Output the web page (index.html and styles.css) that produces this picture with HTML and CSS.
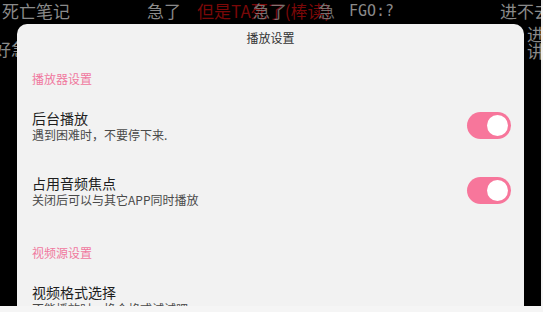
FILE: index.html
```html
<!DOCTYPE html>
<html lang="zh">
<head>
<meta charset="utf-8">
<link rel="stylesheet" href="styles.css">
</head>
<body>
<div class="screen">
  <div class="danmaku">
    <span class="dm gray d1">死亡笔记</span>
    <span class="dm gray d2">急了</span>
    <span class="dm red d3">但是TA死了(棒读)</span>
    <span class="dm gray d4">急了</span>
    <span class="dm gray d5">急</span>
    <span class="dm gray d6">FGO:?</span>
    <span class="dm gray d7">进不去</span>
    <span class="dm gray d8">进不去</span>
    <span class="dm gray d9">讲不去</span>
    <span class="dm gray d10">好急</span>
    <span class="dm gray d11">前方高能</span>
    <span class="dm gray d12">哈哈哈哈哈</span>
    <span class="dm gray d13">来了来了</span>
  </div>
  <div class="dialog">
    <div class="dialog-title">播放设置</div>
    <div class="section-header">播放器设置</div>
    <div class="item">
      <div class="item-text">
        <div class="item-title">后台播放</div>
        <div class="item-sub">遇到困难时，不要停下来.</div>
      </div>
      <span class="switch"><span class="knob"></span></span>
    </div>
    <div class="item">
      <div class="item-text">
        <div class="item-title">占用音频焦点</div>
        <div class="item-sub">关闭后可以与其它APP同时播放</div>
      </div>
      <span class="switch"><span class="knob"></span></span>
    </div>
    <div class="section-header">视频源设置</div>
    <div class="item">
      <div class="item-text">
        <div class="item-title">视频格式选择</div>
        <div class="item-sub">不能播放时，换个格式试试吧</div>
      </div>
    </div>
  </div>
</div>
</body>
</html>
```

FILE: styles.css
```css
html, body {
  margin: 0;
  padding: 0;
}
body {
  background: #f5f5f5;
  width: 543px;
  height: 312px;
  overflow: hidden;
  font-family: "Noto Sans CJK SC", "Noto Sans", sans-serif;
}
.screen {
  position: relative;
  width: 541px;
  height: 306px;
  background: #000;
  overflow: hidden;
  box-sizing: border-box;
  padding: 24px 17px 0 17px;
}
.danmaku {
  position: absolute;
  inset: 0;
  z-index: 0;
}
.dm {
  position: absolute;
  font-size: 17px;
  line-height: 20px;
  white-space: nowrap;
}
.gray { color: #8a8a8a; }
.red { color: #7a0808; }
.d1 { left: 2px; top: 1px; }
.d2 { left: 147px; top: 1px; }
.d3 { left: 197px; top: 1px; }
.d4 { left: 253px; top: 1px; opacity: 0.8; }
.d5 { left: 318px; top: 1px; opacity: 0.8; }
.d6 { left: 349px; top: 1px; font-family: "DejaVu Sans Mono", monospace; font-size: 15px; }
.d7 { left: 500px; top: 1px; }
.d8 { left: 527px; top: 24px; }
.d9 { left: 527px; top: 41px; }
.d10 { left: -6px; top: 39px; }
.d11 { left: 100px; top: 22px; opacity: 0.7; }
.d12 { left: 175px; top: 22px; opacity: 0.7; }
.d13 { left: 420px; top: 22px; opacity: 0.7; }

.dialog {
  position: relative;
  z-index: 1;
  background: #f2f2f2;
  border-radius: 10px 10px 0 0;
  height: 300px;
  display: flex;
  flex-direction: column;
}
.dialog-title {
  height: 25px;
  line-height: 27px;
  text-align: center;
  font-size: 12px;
  color: #333;
}
.section-header {
  padding: 21px 15px 6px;
  line-height: 17px;
  font-size: 12px;
  color: #f0789e;
}
.item {
  display: flex;
  align-items: center;
  justify-content: space-between;
  padding: 15.5px 13px 15.5px 15px;
}
.item-text {
  display: flex;
  flex-direction: column;
}
.item-title {
  font-size: 14px;
  line-height: 18px;
  color: #1e1e1e;
}
.item-sub {
  font-size: 12px;
  line-height: 16px;
  color: #4a4a4a;
}
.switch {
  position: relative;
  width: 44px;
  height: 27px;
  border-radius: 14px;
  background: #f7769b;
  display: flex;
  align-items: center;
  justify-content: flex-end;
  padding-right: 3px;
  box-sizing: border-box;
}
.knob {
  width: 21px;
  height: 21px;
  border-radius: 50%;
  background: #fff;
}
```
